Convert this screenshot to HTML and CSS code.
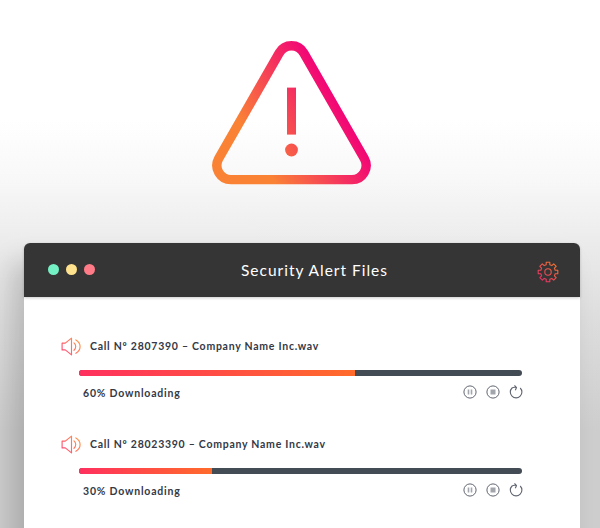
FILE: index.html
```
<!DOCTYPE html>
<html lang="en">
<head>
<meta charset="utf-8">
<title>Security Alert Files</title>
<link rel="stylesheet" href="styles.css">
</head>
<body>
<svg class="defs" width="0" height="0" aria-hidden="true">
  <defs>
    <linearGradient id="speaker-tone" gradientUnits="userSpaceOnUse" x1="1" y1="15" x2="18" y2="3"><stop stop-color="#ff4a78"/><stop offset="1" stop-color="#ff9848"/></linearGradient>
    <symbol id="speaker" viewBox="0 0 21 19">
      <g fill="none" stroke="url(#speaker-tone)" stroke-width="1.15" stroke-linejoin="round" stroke-linecap="round">
        <path d="M4.3 6.1H1.1v6.8h3.2M4.3 6.1 10.5 1.1v16.8L4.3 12.9M13 5.9c2.3 2 2.3 5.4 0 7.4M14.9 2.9c5.6 3.1 5.6 10.3 0 13.4"/>
      </g>
    </symbol>
    <symbol id="pause" viewBox="0 0 14 14">
      <circle cx="7" cy="7" r="6.1" fill="none" stroke="#606570"/>
      <path d="M4.7 4.5h1.6v5H4.7zM7.7 4.5h1.6v5H7.7z" fill="#a3a5ad"/>
    </symbol>
    <symbol id="stop" viewBox="0 0 14 14">
      <circle cx="7" cy="7" r="6.1" fill="none" stroke="#606570"/>
      <path d="M4.5 4.5h5v5h-5z" fill="#a3a5ad"/>
    </symbol>
    <symbol id="reload" viewBox="0 0 14 14">
      <path d="M11.2 3A5.8 5.8 0 1 1 3 3Q4.8 1.9 7.5 2.5M5.5.4 7.5 2.5 6.3 5.2" fill="none" stroke="#606570" stroke-width="1.1"/>
    </symbol>
  </defs>
</svg>
<main class="scene">
  <svg class="warning" viewBox="0 0 160 144" width="160" height="144">
    <defs><linearGradient id="alert-tone" gradientUnits="userSpaceOnUse" x1="40" y1="103" x2="121" y2="56"><stop stop-color="#fa8235"/><stop offset="1" stop-color="#f20775"/></linearGradient></defs>
    <path d="M67.3 11.9a14 14 0 0 1 24.4 0L152.3 117.5A14.2 14.2 0 0 1 140 138.6H19A14.2 14.2 0 0 1 6.7 117.5z" fill="none" stroke="url(#alert-tone)" stroke-width="9.4"/>
    <path d="M75 46.6h9v47h-9z" fill="url(#alert-tone)"/>
    <circle cx="79.5" cy="109" r="6.4" fill="url(#alert-tone)"/>
  </svg>
  <section class="window">
    <header class="titlebar">
      <div class="dots"><i class="dot green"></i><i class="dot yellow"></i><i class="dot red"></i></div>
      <h1 class="title">Security Alert Files</h1>
      <svg class="gear" viewBox="-11 -11 22 22" width="22" height="22">
        <defs><linearGradient id="gear-tone" gradientUnits="userSpaceOnUse" x1="-7" y1="8" x2="7" y2="-8"><stop stop-color="#e82e64"/><stop offset="1" stop-color="#ef7635"/></linearGradient></defs>
        <path d="M-1.8-9.8H1.8V-7.2L3.8-6.4 5.7-8.2 8.2-5.7 6.4-3.8 7.2-1.8H9.8V1.8H7.2L6.4 3.8 8.2 5.7 5.7 8.2 3.8 6.4 1.8 7.2V9.8H-1.8V7.2L-3.8 6.4-5.7 8.2-8.2 5.7-6.4 3.8-7.2 1.8H-9.8V-1.8H-7.2L-6.4-3.8-8.2-5.7-5.7-8.2-3.8-6.4-1.8-7.2z" fill="none" stroke="url(#gear-tone)" stroke-width="1.1" stroke-linejoin="round"/>
        <circle r="3.2" fill="none" stroke="url(#gear-tone)" stroke-width="1.1"/>
      </svg>
    </header>
    <div class="files">
      <article class="file">
        <div class="name-row"><svg class="speaker" width="21" height="19"><use href="#speaker"/></svg><span class="name">Call Nº 2807390 – Company Name Inc.wav</span></div>
        <div class="track"><div class="fill" style="width:62.2%"></div></div>
        <div class="status-row"><span class="status">60% Downloading</span>
          <div class="controls"><svg width="14" height="14"><use href="#pause"/></svg><svg width="14" height="14"><use href="#stop"/></svg><svg width="14" height="14"><use href="#reload"/></svg></div></div>
      </article>
      <article class="file">
        <div class="name-row"><svg class="speaker" width="21" height="19"><use href="#speaker"/></svg><span class="name">Call Nº 28023390 – Company Name Inc.wav</span></div>
        <div class="track"><div class="fill" style="width:30%"></div></div>
        <div class="status-row"><span class="status">30% Downloading</span>
          <div class="controls"><svg width="14" height="14"><use href="#pause"/></svg><svg width="14" height="14"><use href="#stop"/></svg><svg width="14" height="14"><use href="#reload"/></svg></div></div>
      </article>
    </div>
  </section>
</main>
</body>
</html>
```
FILE: styles.css
```
* { box-sizing: border-box; }
body { margin: 0; font-family: Lato, "Liberation Sans", sans-serif; }
.defs { display: block; }
.scene {
  height: 528px;
  padding: 41px 20px 0 24px;
  overflow: hidden;
  background: linear-gradient(#fff 0, #fff 120px, #f8f8f8 180px, #ebebeb 245px, #dddddd 320px, #cdcdcd 430px, #cdcdcd 528px);
}
.warning { display: block; margin-left: 188px; }
.window {
  height: 360px;
  margin-top: 58px;
  border-radius: 6px 6px 0 0;
  background: #fff;
  box-shadow: -12px 18px 26px rgba(0, 0, 0, .17);
}
.titlebar {
  display: grid;
  grid-template-columns: 1fr auto 1fr;
  align-items: center;
  height: 54px;
  padding: 0 21px 0 24px;
  border-radius: 6px 6px 0 0;
  background: #353535;
  box-shadow: 0 1px 3px rgba(0, 0, 0, .2);
}
.dots { display: flex; gap: 7px; margin-top: -2px; }
.dot { width: 11px; height: 11px; border-radius: 50%; }
.green { background: #74f0c5; }
.yellow { background: #ffe28d; }
.red { background: #ff7b87; }
.title { margin: 0 0 0 22px; color: #fff; font-size: 15.5px; font-weight: 400; letter-spacing: 1px; line-height: 20px; white-space: nowrap; }
.gear { justify-self: end; margin-top: 3px; }
.files { padding: 40px 58px 0 37px; }
.file { height: 98px; }
.name-row { display: flex; align-items: center; height: 19px; gap: 8px; }
.name, .status { color: #343946; font-size: 10.5px; font-weight: 700; letter-spacing: .74px; line-height: 15px; white-space: nowrap; }
.track { height: 6px; margin: 14px 0 0 18px; border-radius: 3px; overflow: hidden; background: #434b54; }
.fill { height: 100%; background: linear-gradient(90deg, #ff305e, #ff6b2b); }
.status-row { display: flex; align-items: center; justify-content: space-between; height: 18px; margin: 8px -1px 0 22px; }
.controls { display: flex; gap: 9.25px; margin-top: -2px; }
.status { letter-spacing: .8px; }
```
